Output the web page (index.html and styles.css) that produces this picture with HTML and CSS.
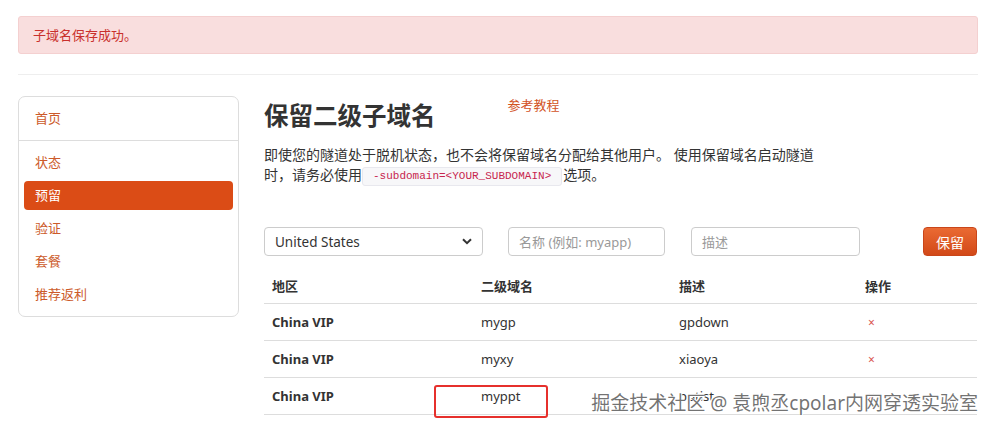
FILE: index.html
```html
<!DOCTYPE html>
<html lang="zh-CN">
<head>
<meta charset="utf-8">
<title>保留二级子域名</title>
<link rel="stylesheet" href="styles.css">
</head>
<body>
<div class="page">
  <div class="alert">子域名保存成功。</div>
  <hr class="rule">
  <div class="main">
    <nav class="sidebar">
      <div class="group first">
        <a class="item">首页</a>
      </div>
      <div class="group">
        <a class="item">状态</a>
        <a class="item active">预留</a>
        <a class="item">验证</a>
        <a class="item">套餐</a>
        <a class="item">推荐返利</a>
      </div>
    </nav>
    <section class="content">
      <div class="title-row">
        <h1 class="title">保留二级子域名</h1>
        <a class="tutorial">参考教程</a>
      </div>
      <p class="desc">即使您的隧道处于脱机状态，也不会将保留域名分配给其他用户。 使用保留域名启动隧道时，请务必使用<code class="code">-subdomain=&lt;YOUR_SUBDOMAIN&gt;</code>选项。</p>
      <div class="form-row">
        <div class="select">
          <span>United States</span>
          <svg class="chev" width="10" height="7" viewBox="0 0 10 7"><path d="M1 1.2 L5 5.2 L9 1.2" fill="none" stroke="#333" stroke-width="2"/></svg>
        </div>
        <div class="input name">名称 (例如: myapp)</div>
        <div class="input descin">描述</div>
        <button class="btn">保留</button>
      </div>
      <table class="table">
        <thead>
          <tr><th class="c1">地区</th><th class="c2">二级域名</th><th class="c3">描述</th><th class="c4">操作</th></tr>
        </thead>
        <tbody>
          <tr><td class="region">China VIP</td><td>mygp</td><td>gpdown</td><td><span class="del">×</span></td></tr>
          <tr><td class="region">China VIP</td><td>myxy</td><td>xiaoya</td><td><span class="del">×</span></td></tr>
          <tr><td class="region">China VIP</td><td>myppt</td><td>pptist</td><td><span class="del">×</span></td></tr>
        </tbody>
      </table>
    </section>
  </div>
  <div class="highlight"></div>
  <div class="watermark">掘金技术社区 @ 袁煦丞cpolar内网穿透实验室</div>
</div>
</body>
</html>
```
FILE: styles.css
```css
html, body {
  margin: 0;
  padding: 0;
  background: #fff;
}
body {
  font-family: "Noto Sans", "Open Sans", "Noto Sans CJK SC", sans-serif;
  color: #333;
  font-size: 13px;
  overflow: hidden;
}
.page {
  position: relative;
  width: 993px;
  height: 429px;
  padding: 16px 15px 0 18px;
  box-sizing: border-box;
}
.alert {
  height: 38px;
  box-sizing: border-box;
  background: #f9dede;
  border: 1px solid #f4d0d0;
  border-radius: 3px;
  color: #c9302c;
  font-size: 13px;
  line-height: 36px;
  padding: 0 14px;
}
.rule {
  margin: 20px 0 0;
  border: 0;
  border-top: 1px solid #eee;
  height: 0;
}
.main {
  display: flex;
  gap: 25px;
  margin-top: 21px;
}
.sidebar {
  width: 221px;
  flex: none;
  box-sizing: border-box;
  border: 1px solid #ddd;
  border-radius: 7px;
  height: 221px;
}
.group {
  padding: 5px 5px;
  display: flex;
  flex-direction: column;
}
.group.first {
  border-bottom: 1px solid #ddd;
  padding: 5px 5px 5px;
}
.item {
  display: block;
  height: 29px;
  line-height: 29px;
  margin: 2px 0;
  padding-left: 11px;
  border-radius: 4px;
  color: #cc5a2a;
  font-size: 13px;
}
.item.active {
  background: #db4c16;
  color: #fff;
}
.content {
  width: 713px;
  flex: none;
}
.title-row {
  display: flex;
  align-items: flex-start;
  height: 42px;
}
.title {
  margin: 0;
  font-size: 24.5px;
  font-weight: bold;
  line-height: 40px;
  color: #333;
}
.tutorial {
  margin-left: 72px;
  margin-top: 0;
  font-size: 13px;
  line-height: 18px;
  color: #d2531f;
}
.desc {
  margin: 7px 0 0;
  width: 560px;
  font-size: 14px;
  line-height: 20px;
  color: #333;
}
.code {
  display: inline-block;
  font-family: "Liberation Mono", "DejaVu Sans Mono", monospace;
  font-size: 11px;
  line-height: 17px;
  padding: 0 10px;
  margin: 0 1px 0 0;
  background: #f7f7f9;
  border: 1px solid #e8e8ee;
  border-radius: 3px;
  color: #c7254e;
  vertical-align: 1px;
}
.form-row {
  display: flex;
  align-items: center;
  margin-top: 41px;
  height: 29px;
}
.select, .input {
  height: 29px;
  box-sizing: border-box;
  border: 1px solid #ccc;
  border-radius: 4px;
  display: flex;
  align-items: center;
  padding: 0 10px;
  font-size: 13px;
}
.select {
  width: 219px;
  justify-content: space-between;
  color: #333;
  font-size: 13.5px;
}
.chev { margin-right: 0; }
.input { color: #999; }
.input.name { width: 157px; margin-left: 25px; }
.input.descin { width: 169px; margin-left: 26px; }
.btn {
  margin-left: 63px;
  width: 54px;
  height: 29px;
  border: 1px solid #c9461a;
  border-radius: 4px;
  background: linear-gradient(#ea6a33, #d24918);
  color: #fff;
  font-family: inherit;
  font-size: 14px;
  padding: 0;
}
.table {
  margin-top: 11px;
  width: 713px;
  border-collapse: collapse;
  table-layout: fixed;
}
.table th, .table td {
  text-align: left;
  padding: 0 8px;
  font-size: 13px;
}
.table th {
  height: 36px;
  font-weight: bold;
  border-bottom: 1px solid #ddd;
}
.table td {
  height: 36px;
  border-bottom: 1px solid #ddd;
}
.c1 { width: 193px; }
.c2 { width: 182px; }
.c3 { width: 170px; }
.table td.region { font-weight: bold; }
.del {
  color: #d9534f;
  font-size: 12px;
  padding-left: 3px;
}
.highlight {
  position: absolute;
  left: 434px;
  top: 385px;
  width: 114px;
  height: 33px;
  box-sizing: border-box;
  border: 2px solid #e6302c;
  border-radius: 3px;
}
.watermark {
  position: absolute;
  right: 15px;
  top: 390px;
  font-size: 19px;
  line-height: 26px;
  color: rgba(90, 90, 90, 0.85);
  text-shadow: 0 0 1px #fff, 1px 1px 0 #fff, -1px -1px 0 #fff;
  white-space: nowrap;
}
```
